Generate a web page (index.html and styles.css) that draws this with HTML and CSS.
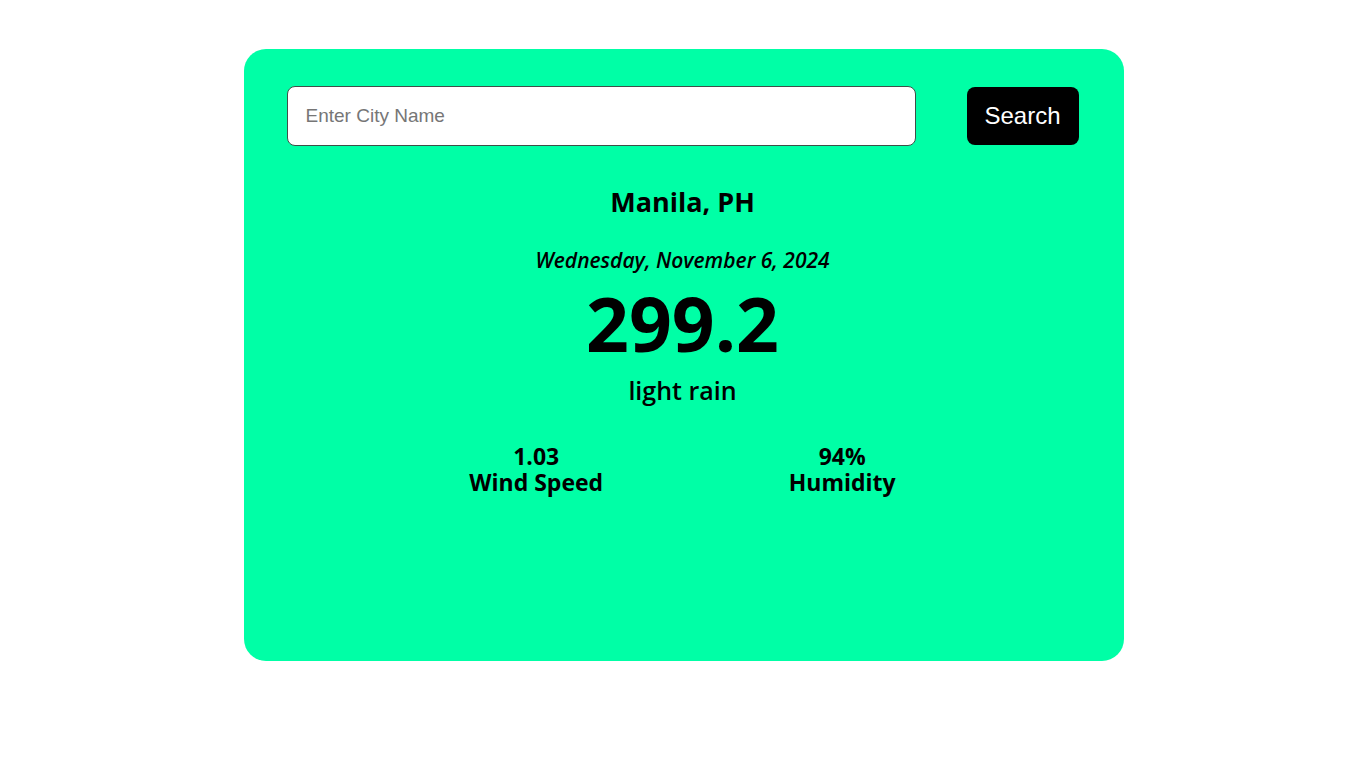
FILE: index.html
```html
<!DOCTYPE html>
<html lang="en">
<head>
<meta charset="utf-8">
<title>Weather</title>
<link rel="stylesheet" href="styles.css">
</head>
<body>
<main class="card">
  <form class="search-row">
    <input class="city-input" type="text" placeholder="Enter City Name">
    <button class="search-btn" type="button">Search</button>
  </form>
  <section class="weather">
    <h2 class="city">Manila, PH</h2>
    <p class="date">Wednesday, November 6, 2024</p>
    <p class="temp">299.2</p>
    <p class="desc">light rain</p>
    <div class="details">
      <div class="detail">
        <span class="detail-value">1.03</span>
        <span class="detail-label">Wind Speed</span>
      </div>
      <div class="detail">
        <span class="detail-value">94%</span>
        <span class="detail-label">Humidity</span>
      </div>
    </div>
  </section>
</main>
</body>
</html>
```

FILE: styles.css
```css
* { box-sizing: border-box; }

html, body {
  margin: 0;
  padding: 0;
  background: #ffffff;
}

body {
  font-family: "Open Sans", "Noto Sans", sans-serif;
  color: #000;
  padding-top: 49px;
  padding-left: 1px;
}

.card {
  width: 880px;
  height: 612px;
  margin: 0 auto;
  background: #00ffa6;
  border-radius: 22px;
  padding: 37px 45px 0 43px;
}

.search-row {
  display: flex;
  align-items: center;
  justify-content: space-between;
  margin: 0;
}

.city-input {
  width: 629px;
  height: 60px;
  border: 1px solid #3f4f48;
  border-radius: 8px;
  padding: 0 18px;
  font-family: "Liberation Sans", Arial, sans-serif;
  font-size: 19px;
  background: #fff;
  outline: none;
}

.city-input::placeholder {
  color: #767676;
}

.search-btn {
  width: 112px;
  height: 58px;
  border: none;
  border-radius: 8px;
  background: #000;
  color: #fff;
  font-family: "Liberation Sans", Arial, sans-serif;
  font-size: 24px;
  cursor: pointer;
}

.weather {
  display: flex;
  flex-direction: column;
  align-items: center;
  text-align: center;
}

.city {
  margin: 38px 0 0;
  font-size: 27px;
  font-weight: 700;
  line-height: 36px;
}

.date {
  margin: 26px 0 0;
  font-size: 21px;
  font-style: italic;
  font-weight: 600;
  line-height: 28px;
}

.temp {
  margin: -2px 0 0;
  font-size: 75px;
  font-weight: 700;
  line-height: 102px;
}

.desc {
  margin: -1px 0 0;
  font-size: 25px;
  font-weight: 600;
  line-height: 34px;
}

.details {
  width: 612px;
  margin-top: 36px;
  display: flex;
  justify-content: space-around;
}

.detail {
  display: flex;
  flex-direction: column;
  align-items: center;
  font-size: 23px;
  font-weight: 700;
  line-height: 26px;
}
```
